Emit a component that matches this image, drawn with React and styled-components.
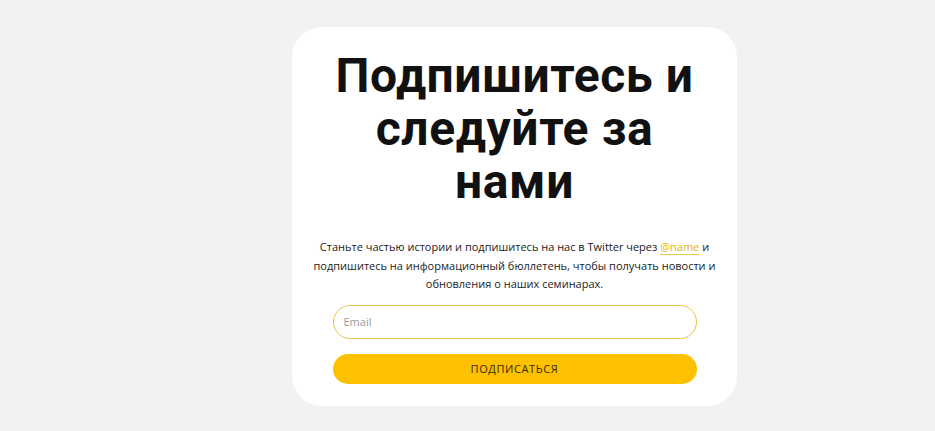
import React from "react";
import styled, { createGlobalStyle } from "styled-components";

const GlobalStyle = createGlobalStyle`
  html, body {
    margin: 0;
    padding: 0;
    background: #f2f2f2;
  }
  body {
    font-family: "Open Sans", "Liberation Sans", sans-serif;
  }
`;

const Page = styled.div`
  min-height: 431px;
  display: flex;
  align-items: flex-start;
  padding: 27px 0 0 292px;
  box-sizing: border-box;
`;

const Card = styled.section`
  width: 445px;
  height: 379px;
  box-sizing: border-box;
  background: #ffffff;
  border-radius: 30px;
  padding: 22px 10px 0;
  display: flex;
  flex-direction: column;
  align-items: center;
`;

const Title = styled.h1`
  margin: 0;
  font-family: Roboto, "Liberation Sans", sans-serif;
  font-weight: 700;
  font-size: 48px;
  line-height: 53px;
  letter-spacing: 0.6px;
  color: #111111;
  text-align: center;
  width: 380px;
`;

const Lead = styled.p`
  margin: 30px 0 0;
  font-family: "Open Sans", "Liberation Sans", sans-serif;
  font-size: 11px;
  line-height: 18.5px;
  color: #222222;
  text-align: center;
`;

const Handle = styled.a`
  color: #e8b400;
  text-decoration: none;
  border-bottom: 1px solid #f0c64a;
`;

const Form = styled.form`
  margin-top: 11px;
  width: 364px;
  display: flex;
  flex-direction: column;
  gap: 15px;
`;

const EmailInput = styled.input`
  height: 34px;
  box-sizing: border-box;
  border: 1px solid #e6c54a;
  border-radius: 17px;
  padding: 0 10px;
  font-family: "Open Sans", "Liberation Sans", sans-serif;
  font-size: 11px;
  color: #333;
  outline: none;
  &::placeholder {
    color: #9a9a9a;
  }
`;

const SubmitButton = styled.button`
  height: 30px;
  border: none;
  border-radius: 15px;
  background: #fdc100;
  color: #3a2a00;
  font-family: "Open Sans", "Liberation Sans", sans-serif;
  font-size: 11px;
  letter-spacing: 0.6px;
  text-transform: uppercase;
  cursor: pointer;
`;

export default function App() {
  return (
    <>
      <GlobalStyle />
      <Page>
        <Card>
          <Title>Подпишитесь и следуйте за нами</Title>
          <Lead>
            Станьте частью истории и подпишитесь на нас в Twitter через{" "}
            <Handle href="#">@name</Handle> и
            <br />
            подпишитесь на информационный бюллетень, чтобы получать новости и
            <br />
            обновления о наших семинарах.
          </Lead>
          <Form onSubmit={(e) => e.preventDefault()}>
            <EmailInput type="email" placeholder="Email" />
            <SubmitButton type="submit">Подписаться</SubmitButton>
          </Form>
        </Card>
      </Page>
    </>
  );
}
